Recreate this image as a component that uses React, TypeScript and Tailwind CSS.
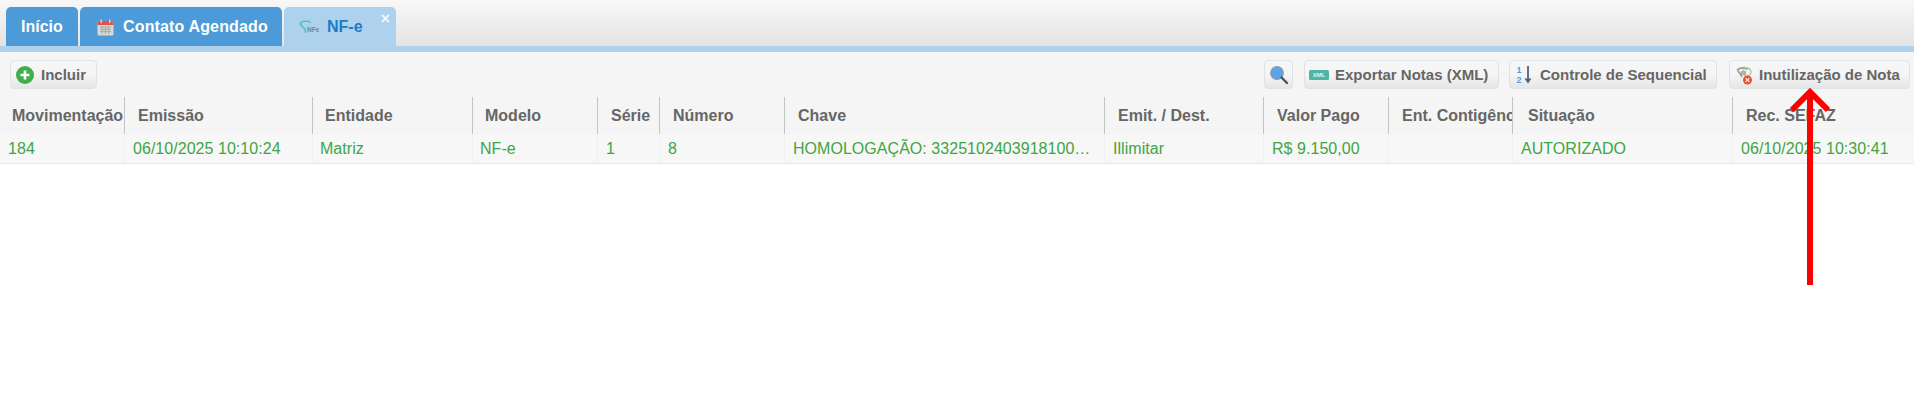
const columns = [
  { title: "Movimentação", value: "184", headPad: "pl-3", cellPad: "pl-2" },
  { title: "Emissão", value: "06/10/2025 10:10:24", headPad: "pl-[13px]", cellPad: "pl-2" },
  { title: "Entidade", value: "Matriz", headPad: "pl-3", cellPad: "pl-[7px]" },
  { title: "Modelo", value: "NF-e", headPad: "pl-3", cellPad: "pl-[7px]" },
  { title: "Série", value: "1", headPad: "pl-[13px]", cellPad: "pl-2" },
  { title: "Número", value: "8", headPad: "pl-[13px]", cellPad: "pl-2" },
  { title: "Chave", value: "HOMOLOGAÇÃO: 33251024039181000000550010000000081000000080", headPad: "pl-[13px]", cellPad: "pl-2 pr-[10px]" },
  { title: "Emit. / Dest.", value: "Illimitar", headPad: "pl-[13px]", cellPad: "pl-2" },
  { title: "Valor Pago", value: "R$ 9.150,00", headPad: "pl-[13px]", cellPad: "pl-2" },
  { title: "Ent. Contigência", value: "", headPad: "pl-[13px]", cellPad: "pl-2" },
  { title: "Situação", value: "AUTORIZADO", headPad: "pl-[15px]", cellPad: "pl-2" },
  { title: "Rec. SEFAZ", value: "06/10/2025 10:30:41", headPad: "pl-[13px]", cellPad: "pl-2" },
];

const gridCols =
  "grid grid-cols-[124px_188px_160px_125px_62px_125px_320px_159px_125px_124px_220px_182px]";

const btn =
  "flex h-[29px] items-center rounded-[4px] border border-[#e2e2e2] bg-linear-to-b from-[#f6f6f6] via-[#f5f5f5] to-[#e6e6e6] pt-px text-[15px] font-bold text-[#666666]";

const CalendarIcon = () => (
  <svg width="17" height="17" viewBox="0 0 17 17" className="shrink-0">
    <rect x="0.5" y="2" width="16" height="14.5" rx="1.5" fill="#d8d8d2" />
    <path d="M0.5 3.5A1.5 1.5 0 0 1 2 2h13a1.5 1.5 0 0 1 1.5 1.5V6H0.5z" fill="#ea4f45" />
    <rect x="3.5" y="0.5" width="1.5" height="3.5" fill="#f3c7c0" />
    <rect x="12" y="0.5" width="1.5" height="3.5" fill="#f3c7c0" />
    <path d="M3 8h11M3 10.3h11M3 12.6h11M5.2 7.5v7M8.5 7.5v7M11.8 7.5v7" stroke="#a9a9a4" strokeWidth="1" />
  </svg>
);

const NfeIcon = () => (
  <svg width="20" height="14" viewBox="0 0 20 14" className="shrink-0">
    <path d="M1 3.5C3 1 6 .8 9 1.2l3 1.6M1 3.5l2.500 3.2L6 9l.6 4" fill="none" stroke="#3fc0ae" strokeWidth="1.3" />
    <text x="8" y="11.5" fontSize="6.5" fontWeight="700" fill="#5f8aa8" fontFamily="Liberation Sans">NFe</text>
  </svg>
);

const PlusIcon = () => (
  <svg width="18" height="18" viewBox="0 0 18 18" className="shrink-0">
    <circle cx="9" cy="9" r="9" fill="#41ae4c" />
    <path d="M9 4.500v9M4.500 9h9" stroke="#ffffff" strokeWidth="2.6" />
  </svg>
);

const SearchIcon = () => (
  <svg width="20" height="20" viewBox="0 0 20 20">
    <circle cx="8" cy="8" r="6.3" fill="#5aa5e8" stroke="#8a9aa6" strokeWidth="1.2" />
    <path d="M12.5 12.5l5.5 5.5" stroke="#45525c" strokeWidth="2.4" strokeLinecap="round" />
  </svg>
);

const XmlIcon = () => (
  <svg width="20" height="10" viewBox="0 0 20 10" className="shrink-0">
    <rect width="20" height="10" rx="1.5" fill="#4cb5a3" />
    <text x="10" y="7.2" textAnchor="middle" fontSize="6" fontWeight="700" fill="#e4f5f1" fontFamily="Liberation Sans">XML</text>
  </svg>
);

const SortIcon = () => (
  <svg width="18" height="20" viewBox="0 0 18 20" className="shrink-0">
    <text x="0.5" y="8" fontSize="9" fontWeight="700" fill="#4d9fe8" fontFamily="Liberation Sans">1</text>
    <text x="0.5" y="18" fontSize="9" fontWeight="700" fill="#4d9fe8" fontFamily="Liberation Sans">2</text>
    <path d="M12 1v14" stroke="#55626d" strokeWidth="1.8" />
    <path d="M8.5 13.5h7L12 18.5z" fill="#55626d" />
  </svg>
);

const CancelIcon = () => (
  <svg width="17" height="20" viewBox="0 0 17 20" className="shrink-0">
    <path d="M1 5.5C3 3 6 2.5 9 3l2.500 1.500M2 6l2.500 3L6 12" fill="none" stroke="#9a9a92" strokeWidth="1.8" />
    <path d="M5 6h5v4H5z" fill="#b0b0a8" />
    <circle cx="11" cy="7" r="4" fill="none" stroke="#a8c690" strokeWidth="1.3" />
    <circle cx="11.5" cy="15" r="4.5" fill="#f0502c" />
    <path d="M9.700 13.200l3.600 3.600M13.300 13.200l-3.600 3.600" stroke="#ffffff" strokeWidth="1.2" />
  </svg>
);

export default function App() {
  return (
    <div className="relative h-[401px] w-[1914px] overflow-hidden bg-white font-['Liberation_Sans',Arial,sans-serif] text-base">
      {/* abas */}
      <div className="flex h-[46px] items-end gap-0.5 bg-linear-to-b from-[#f8f8f8] to-[#e3e3e3] pl-1.5">
        <div className="flex h-[39px] w-[72px] items-center rounded-t-[5px] bg-[#4c9ad8] pl-[15px] pt-px font-bold text-white">
          Início
        </div>
        <div className="flex h-[39px] w-[202px] items-center gap-[9px] rounded-t-[5px] bg-[#4c9ad8] pl-[17px] pt-px font-bold tracking-[0.15px] text-white">
          <CalendarIcon />
          Contato Agendado
        </div>
        <div className="relative flex h-[39px] w-[112px] items-center gap-2 rounded-t-[5px] bg-[#aed2ee] pl-[15px] pt-px font-bold text-[#1c7bc6]">
          <NfeIcon />
          NF-e
          <svg width="9" height="9" viewBox="0 0 9 9" className="absolute right-[6px] top-[7px]">
            <path d="M1 1l7 7M8 1l-7 7" stroke="#ffffff" strokeWidth="1.6" />
          </svg>
        </div>
      </div>
      <div className="h-1.5 bg-[#aed2ee]" />

      {/* barra de ferramentas */}
      <div className="flex items-start justify-between bg-[#f5f5f5] pl-2.5 pr-1 pt-2">
        <button className={`${btn} w-[87px] gap-[7px] pl-[5px]`}>
          <PlusIcon />
          Incluir
        </button>
        <div className="flex">
          <button className={`${btn} w-[29px] justify-center`}>
            <SearchIcon />
          </button>
          <button className={`${btn} ml-[11px] w-[195px] gap-1.5 pl-[4px]`}>
            <XmlIcon />
            Exportar Notas (XML)
          </button>
          <button className={`${btn} ml-2.5 w-[208px] gap-1.5 pl-1.5`}>
            <SortIcon />
            Controle de Sequencial
          </button>
          <button className={`${btn} ml-3 w-[181px] gap-1.5 pl-1.5`}>
            <CancelIcon />
            Inutilização de Nota
          </button>
        </div>
      </div>

      {/* cabeçalho da tabela */}
      <div className={`${gridCols} bg-[#f5f5f5] pt-2`}>
        {columns.map((col, i) => (
          <div
            key={col.title}
            className={`h-[37px] overflow-hidden whitespace-nowrap font-bold leading-[37px] text-[#666666] ${col.headPad} ${
              i > 0 ? "border-l border-[#c4c4c4]" : ""
            }`}
          >
            {col.title}
          </div>
        ))}
      </div>

      {/* linha */}
      <div className={`${gridCols} h-[30px] border-b border-[#e9e9e9] bg-[#f7f7f7] text-[#3fa544]`}>
        {columns.map((col, i) => (
          <div
            key={col.title}
            className={`truncate leading-[29px] tracking-[0.04px] ${col.cellPad} ${
              i > 0 ? "border-l border-[#efefef]" : ""
            }`}
          >
            {col.value}
          </div>
        ))}
      </div>

      {/* seta vermelha por cima da tela */}
      <svg width="44" height="198" viewBox="0 0 44 198" className="absolute left-[1788px] top-[87px]">
        <path d="M22 5V198" stroke="#ff0000" strokeWidth="6" />
        <path d="M4 23L22 5l18 18" fill="none" stroke="#ff0000" strokeWidth="6" />
      </svg>
    </div>
  );
}
